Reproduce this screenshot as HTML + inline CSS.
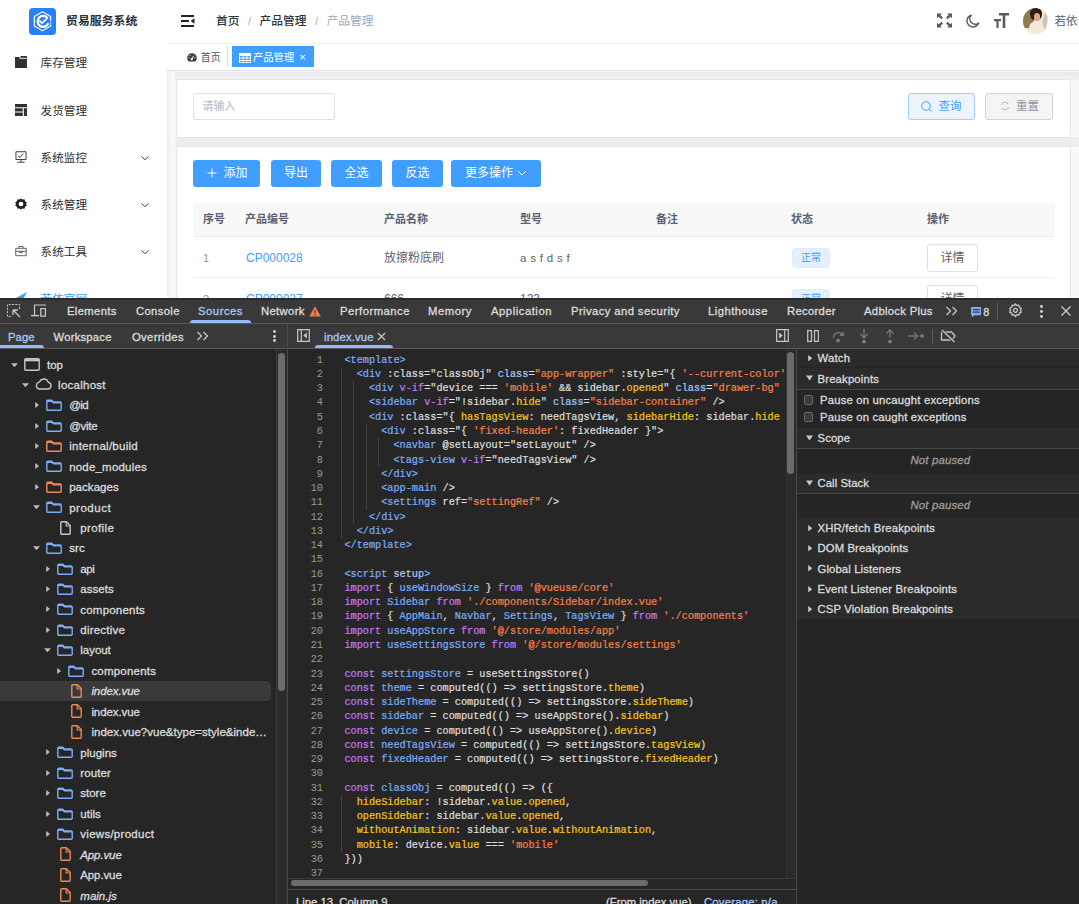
<!DOCTYPE html>
<html lang="zh-CN">
<head>
<meta charset="utf-8">
<title>贸易服务系统</title>
<style>
*{box-sizing:border-box;margin:0;padding:0}
html,body{width:1079px;height:904px;overflow:hidden;background:#fff}
body{position:relative;font-family:"Liberation Sans","Noto Sans CJK SC",sans-serif;-webkit-font-smoothing:antialiased}
.abs{position:absolute}
/* ---------- web page ---------- */
#page{position:absolute;left:0;top:0;width:1079px;height:298px;overflow:hidden;background:#f8f8f9;color:#303133;font-size:12px}
#side{position:absolute;left:0;top:0;width:167px;height:298px;background:#fff;box-shadow:1px 0 5px rgba(0,21,41,.07)}
#side .logo{position:absolute;left:29px;top:8px;width:27px;height:27px;border-radius:4px;background:#2a80f5}
#side .title{position:absolute;left:66px;top:11.700px;font-size:11.900px;font-weight:700;color:#2b2f3a;white-space:nowrap;line-height:18px}
.mi{position:absolute;left:0;width:167px;height:47px;line-height:47px;color:#303133;font-size:11.600px;white-space:nowrap}
.mi .tx{position:absolute;left:40.600px;top:0}
.mi svg.ic{position:absolute;left:15px;top:17px;width:12px;height:12px}
.mi svg.ar{position:absolute;left:140px;top:19px;width:10px;height:10px}
#nav{position:absolute;left:167px;top:0;width:912px;height:43px;background:#fff}
#tags{position:absolute;left:167px;top:43px;width:912px;height:28px;background:#fff;border-top:1px solid #f1f1f3;border-bottom:1px solid #dfe1e5}
.band{position:absolute;left:175px;width:904px}
.card{position:absolute;left:176px;width:895px;background:#fff;border:1px solid #e4e6ea;border-radius:3px}
.btn{position:absolute;height:27px;line-height:27px;border-radius:3px;background:#409eff;color:#fff;font-size:12px;text-align:center;white-space:nowrap}
.th{position:absolute;top:0;line-height:33px;font-weight:700;color:#5a6172;font-size:11px;white-space:nowrap}
.td{position:absolute;white-space:nowrap;font-size:12px;color:#606266}
/* ---------- devtools ---------- */
#dt{position:absolute;left:0;top:298px;width:1079px;height:606px;background:#262626;color:#e3e3e3;font-size:11.5px;overflow:hidden}
.t{position:absolute;white-space:nowrap;-webkit-text-stroke:.3px}
#dt svg{display:block}
#ln{font-family:"Liberation Mono",monospace;font-size:10.220px;line-height:14.260px;color:#9a9a9a;text-align:right}
#code{font-family:"Liberation Mono",monospace;font-size:10.220px;line-height:14.260px;color:#dedede;white-space:pre;-webkit-text-stroke:.22px}
.ct{color:#7cacf8}.ca{color:#a8c7fa}.ck{color:#c27af5}.cs{color:#f4804a}.cp{color:#f7c41c}.cd{color:#7cacf8}
</style>
</head>
<body>
<div id="page">
<div id="side">
  <div class="logo"><svg viewBox="0 0 27 27" width="27" height="27"><path d="M13.500 3.800L21.600 8.500V18L13.500 22.700 5.400 18V8.500z" fill="none" stroke="#fff" stroke-width="1.300" stroke-linejoin="round" opacity=".92"/><path d="M18.200 9.700A5.500 5.500 0 1 0 18.900 16" fill="none" stroke="#fff" stroke-width="2.300" stroke-linecap="round"/><path d="M10.800 13l2.300 2.200 4.200-4" fill="none" stroke="#fff" stroke-width="1.800" stroke-linecap="round" stroke-linejoin="round"/><path d="M21.600 12v4.500" stroke="#2a80f5" stroke-width="2.200"/><path d="M21.700 12.300v3.900" stroke="#b9d6ff" stroke-width="1"/></svg></div>
  <div class="title">贸易服务系统</div>
  <div class="mi" style="top:38.600px"><svg class="ic" viewBox="0 0 13 13"><path d="M0 1h5v2h8v10H0z" fill="#303133"/><path d="M6 0h7v2H6z" fill="#303133"/></svg><span class="tx">库存管理</span></div>
  <div class="mi" style="top:86.5px"><svg class="ic" viewBox="0 0 13 13"><path d="M0 0h13v3.4H0zM0 4.6h8.4v3.4H0zM9.6 4.6H13V13H9.6zM0 9.2h8.4V13H0z" fill="#303133"/></svg><span class="tx">发货管理</span></div>
  <div class="mi" style="top:133.5px"><svg class="ic" viewBox="0 0 13 13"><path d="M1 .8h11v8.4H1z" fill="none" stroke="#303133" stroke-width="1"/><path d="M3.4 5.2l2 1.8 3.6-4" fill="none" stroke="#303133" stroke-width="1"/><path d="M6.5 9.2v2.6M2.6 12.2h7.8" stroke="#303133" stroke-width="1"/></svg><span class="tx">系统监控</span><svg class="ar" viewBox="0 0 10 10"><path d="M1.6 3.4L5 6.8l3.4-3.4" fill="none" stroke="#303133" stroke-width="1"/></svg></div>
  <div class="mi" style="top:180.5px"><svg class="ic" viewBox="0 0 13 13"><path d="M6.5 0l1.7 1.2 2.1-.3.6 2 1.8 1.100-.7 2 .7 2-1.800 1.100-.6 2-2.100-.3L6.500 12l-1.700-1.200-2.100.3-.600-2L.3 8l.7-2-.7-2 1.800-1.100.6-2 2.100.3z" fill="#222" transform="translate(0 .5)"/><circle cx="6.500" cy="6.500" r="2.500" fill="#fff"/></svg><span class="tx">系统管理</span><svg class="ar" viewBox="0 0 10 10"><path d="M1.600 3.400L5 6.800l3.400-3.400" fill="none" stroke="#303133" stroke-width="1"/></svg></div>
  <div class="mi" style="top:227.5px"><svg class="ic" viewBox="0 0 13 13"><path d="M.8 3.600h11.400v8H.8z" fill="none" stroke="#555" stroke-width="1"/><path d="M4.200 3.400V1.600h4.600v1.800M.8 6.800h11.400M5 6.800v1.400h3V6.800" fill="none" stroke="#555" stroke-width="1"/></svg><span class="tx">系统工具</span><svg class="ar" viewBox="0 0 10 10"><path d="M1.600 3.400L5 6.800l3.400-3.400" fill="none" stroke="#303133" stroke-width="1"/></svg></div>
  <div class="mi" style="top:274.5px;color:#409eff"><svg class="ic" viewBox="0 0 13 13"><path d="M13 0L0 7l4.500 1.500L6 13z" fill="#409eff"/></svg><span class="tx">若依官网</span></div>
</div>
<div id="nav">
  <svg class="abs" style="left:14px;top:13.800px" width="14" height="14" viewBox="0 0 14 14"><path d="M0 2h13M0 7h8M0 12h13" stroke="#1f2329" stroke-width="1.900"/><path d="M13.500 4.200v5.600L9.600 7z" fill="#1f2329"/></svg>
  <div class="abs" style="left:49px;top:11px;line-height:20px;font-size:11.750px;white-space:nowrap;color:#303133;font-weight:500"><span>首页</span><span style="color:#a8abb2;margin:0 8.500px;font-size:11px;font-weight:400">/</span><span>产品管理</span><span style="color:#a8abb2;margin:0 8.500px;font-size:11px;font-weight:400">/</span><span style="color:#97a8be;font-weight:400">产品管理</span></div>
  <svg class="abs" style="left:770px;top:13px" width="15" height="15" viewBox="0 0 16 15"><g fill="#585b60"><path d="M0 0h5.200L3.600 1.600 6.400 4.400 4.600 6.200 1.800 3.400 0 5zM16 0v5l-1.800-1.600-2.800 2.800-1.800-1.800 2.800-2.800L10.800 0zM0 15v-5l1.800 1.600 2.800-2.800 1.800 1.800-2.800 2.800L5.200 15zM16 15h-5.200l1.600-1.600-2.800-2.800 1.800-1.800 2.800 2.800L16 10z"/></g></svg>
  <svg class="abs" style="left:798px;top:14px" width="15" height="14" viewBox="0 0 15 14"><path d="M6.200 1.200A6 6 0 1 0 13.600 9 5.400 5.400 0 0 1 6.200 1.200z" fill="none" stroke="#585b60" stroke-width="1.500" stroke-linejoin="round"/></svg>
  <svg class="abs" style="left:827px;top:13px" width="15" height="15" viewBox="0 0 15 15"><path d="M5 0h10v2.400h-3.700V15H8.700V2.400H5zM0 6h7v2.200H4.600V15H2.400V8.200H0z" fill="#585b60"/></svg>
  <div class="abs" style="left:855.500px;top:8px;width:25px;height:25.500px;border-radius:50%;overflow:hidden;background:#f0e6d2"><div class="abs" style="left:-3px;top:-2px;width:14px;height:22px;background:#8d7c50;border-radius:0 0 40% 20%"></div><div class="abs" style="left:7px;top:0;width:12px;height:12px;border-radius:45%;background:#2e1b12"></div><div class="abs" style="left:11px;top:4.500px;width:6.500px;height:8px;border-radius:45%;background:#e2a585"></div><div class="abs" style="left:20px;top:4px;width:4px;height:18px;background:#c9c3b8;transform:rotate(12deg)"></div><div class="abs" style="left:6px;top:13px;width:15px;height:14px;border-radius:50% 50% 0 0;background:#f3ead8"></div></div>
  <div class="abs" style="left:887.500px;top:11px;line-height:20px;font-size:11.600px;white-space:nowrap;color:#5a5e66">若依</div>
</div>
<div id="tags">
  <div class="abs" style="left:20px;top:2px;height:21px;line-height:23.500px;font-size:9.900px;color:#495060;white-space:nowrap"><svg width="10" height="9" viewBox="0 0 10 9" style="vertical-align:-1px;margin-right:3.800px"><path d="M5 .2a4.800 4.800 0 0 0-4.800 4.800c0 1.300.5 2.400 1.200 3.200.2.200.4.300.7.300h5.800c.3 0 .5-.1.700-.3.700-.8 1.200-1.900 1.200-3.200A4.800 4.800 0 0 0 5 .2z" fill="#3a3a3a"/><path d="M4.800 6l2-3.400" stroke="#fff" stroke-width="1"/><circle cx="4.800" cy="6.200" r="1.100" fill="#fff"/><circle cx="2" cy="4.800" r=".6" fill="#fff"/><circle cx="3" cy="2.600" r=".6" fill="#fff"/><circle cx="8" cy="4.800" r=".6" fill="#fff"/></svg>首页</div>
  <div class="abs" style="left:60px;top:2px;width:1px;height:21px;background:#d8dce5"></div>
  <div class="abs" style="left:65px;top:2px;width:82px;height:21px;line-height:23.500px;background:#409eff;color:#fff;font-size:10.300px;white-space:nowrap;padding-left:7px"><svg width="12" height="10" viewBox="0 0 12 10" style="vertical-align:-1.500px;margin-right:2px"><path d="M0 0h12v10H0z" fill="#fff"/><path d="M1 3h2.700v1.600H1zM4.600 3h2.800v1.600H4.600zM8.300 3H11v1.600H8.300zM1 5.500h2.700v1.500H1zM4.600 5.500h2.800v1.500H4.600zM8.300 5.500H11v1.500H8.300zM1 7.900h2.700v1.300H1zM4.600 7.900h2.800v1.300H4.600zM8.300 7.900H11v1.300H8.300z" fill="#409eff"/></svg>产品管理<span style="margin-left:5px;font-size:11px">×</span></div>
</div>
<div class="band" style="top:72px;height:8px;background:linear-gradient(#e9e9eb,#f1f1f2)"></div><div class="band" style="top:137px;height:10px;background:#eeeeef"></div>
<div class="card" style="top:79px;height:59px">
  <div class="abs" style="left:16px;top:13px;width:142px;height:27px;border:1px solid #dcdfe6;border-radius:3px;line-height:25px;padding-left:8.500px;font-size:11px;color:#b4b7be">请输入</div>
  <div class="abs" style="left:731px;top:13px;width:67px;height:27px;border:1px solid #a0cfff;border-radius:3px;background:#ecf5ff;color:#409eff;line-height:25px;font-size:11.500px;white-space:nowrap;padding-left:12px"><svg width="11" height="11" viewBox="0 0 11 11" style="vertical-align:-1.500px;margin-right:6.500px"><circle cx="5" cy="5" r="4.300" fill="none" stroke="#409eff" stroke-width="1"/><path d="M8.200 8.200l2.300 2.300" stroke="#409eff" stroke-width="1"/></svg>查询</div>
  <div class="abs" style="left:808px;top:13px;width:68px;height:27px;border:1px solid #d3d4d6;border-radius:3px;background:#f4f4f5;color:#909399;line-height:25px;font-size:11.500px;white-space:nowrap;padding-left:14px"><svg width="10" height="10" viewBox="0 0 10 10" style="vertical-align:-1px;margin-right:6px"><path d="M1.400 3.600A4 4 0 0 1 8.600 3.600M8.600 6.400A4 4 0 0 1 1.400 6.400" fill="none" stroke="#909399" stroke-width="1" stroke-dasharray="2 1"/></svg>重置</div>
</div>
<div class="card" style="top:146px;height:170px">
  <div class="btn" style="left:16px;top:12.500px;width:67px"><svg style="position:absolute;left:14px;top:8.500px" width="10" height="10" viewBox="0 0 10 10"><path d="M5 .5v9M.5 5h9" stroke="#fff" stroke-width="1"/></svg><span style="position:absolute;left:30.500px;top:0">添加</span></div>
  <div class="btn" style="left:94px;top:12.500px;width:50px">导出</div>
  <div class="btn" style="left:154px;top:12.500px;width:51px">全选</div>
  <div class="btn" style="left:215px;top:12.500px;width:51px">反选</div>
  <div class="btn" style="left:274px;top:12.500px;width:90px">更多操作<svg width="10" height="10" viewBox="0 0 10 10" style="margin-left:4px;vertical-align:-1px"><path d="M1 3L5 7l4-4" fill="none" stroke="#fff" stroke-width="1"/></svg></div>
  <div class="abs" style="left:16px;top:56px;width:862px;height:34px;background:#f8f8f9;border-bottom:1px solid #ebeef5">
    <div class="th" style="left:10px">序号</div><div class="th" style="left:52px">产品编号</div><div class="th" style="left:191px">产品名称</div><div class="th" style="left:327px">型号</div><div class="th" style="left:463px">备注</div><div class="th" style="left:598px">状态</div><div class="th" style="left:734px">操作</div>
  </div>
  <div class="abs" style="left:16px;top:90px;width:862px;height:41px;border-bottom:1px solid #ebeef5;line-height:42px">
    <div class="td" style="left:10px;color:#909399;font-size:11px">1</div><div class="td" style="left:53px;color:#409eff">CP000028</div><div class="td" style="left:191px">放擦粉底刷</div><div class="td" style="left:327px;letter-spacing:.3px;font-size:11.500px">a s f d s f</div>
    <div class="abs" style="left:599px;top:10.500px;width:38px;height:20px;line-height:18px;border:1px solid #dcebfd;border-radius:4px;background:#e4f0ff;color:#409eff;font-size:10px;text-align:center">正常</div>
    <div class="abs" style="left:734px;top:7px;width:51px;height:27.500px;line-height:26px;border:1px solid #dcdfe6;border-radius:3px;background:#fff;color:#606266;font-size:12px;text-align:center">详情</div>
  </div>
  <div class="abs" style="left:16px;top:131px;width:862px;height:41px;line-height:42px">
    <div class="td" style="left:10px;color:#909399;font-size:11px">2</div><div class="td" style="left:53px;color:#409eff">CP000027</div><div class="td" style="left:191px">666</div><div class="td" style="left:327px">123</div>
    <div class="abs" style="left:599px;top:10.500px;width:38px;height:20px;line-height:18px;border:1px solid #dcebfd;border-radius:4px;background:#e4f0ff;color:#409eff;font-size:10px;text-align:center">正常</div>
    <div class="abs" style="left:734px;top:7px;width:51px;height:27.500px;line-height:26px;border:1px solid #dcdfe6;border-radius:3px;background:#fff;color:#606266;font-size:12px;text-align:center">详情</div>
  </div>
</div>
</div>
<div id="dt">
<div class="abs" style="left:0px;top:0px;width:1079px;height:2px;background:#2c2c2c;"></div>
<div class="abs" style="left:0px;top:2px;width:1079px;height:23px;background:#393939;"></div>
<div class="abs" style="left:0px;top:25px;width:1079px;height:1px;background:#5a5a5a;"></div>
<div class="abs" style="left:0px;top:26px;width:1079px;height:24px;background:#393939;"></div>
<div class="abs" style="left:0px;top:50px;width:1079px;height:1px;background:#5a5a5a;"></div>
<div class="abs" style="left:190px;top:22.3px;width:61px;height:3.2px;background:#94baf8;border-radius:3px 3px 0 0;"></div>
<svg class="abs" style="left:7px;top:5.5px" width="14" height="14" viewBox="0 0 14 14"><path d="M12.500 5V.500H.500v12H5" fill="none" stroke="#c7c7c7" stroke-width="1" stroke-dasharray="2 1.300"/><path d="M6 6l7 7M6 6h5M6 6v5" fill="none" stroke="#c7c7c7" stroke-width="1.300"/></svg>
<svg class="abs" style="left:31px;top:5.5px" width="16" height="14" viewBox="0 0 16 14"><path d="M3.500 11V1h11.500" fill="none" stroke="#c7c7c7" stroke-width="1.200"/><path d="M0 11.600h8" stroke="#c7c7c7" stroke-width="1.400"/><path d="M9.800 4.600h4.600v7.600H9.800z" fill="none" stroke="#c7c7c7" stroke-width="1.300"/></svg>
<div class="t" style="left:67px;top:5px;line-height:16px;font-size:11.3px;color:#dddddd;letter-spacing:0.34px;">Elements</div>
<div class="t" style="left:136px;top:5px;line-height:16px;font-size:11.3px;color:#dddddd;letter-spacing:0.34px;">Console</div>
<div class="t" style="left:198px;top:5px;line-height:16px;font-size:11.3px;color:#a8c7fa;letter-spacing:0.51px;">Sources</div>
<div class="t" style="left:261px;top:5px;line-height:16px;font-size:11.3px;color:#dddddd;letter-spacing:0.34px;">Network</div>
<div class="t" style="left:340px;top:5px;line-height:16px;font-size:11.3px;color:#dddddd;letter-spacing:0.48px;">Performance</div>
<div class="t" style="left:428px;top:5px;line-height:16px;font-size:11.3px;color:#dddddd;letter-spacing:0.54px;">Memory</div>
<div class="t" style="left:491px;top:5px;line-height:16px;font-size:11.3px;color:#dddddd;letter-spacing:0.52px;">Application</div>
<div class="t" style="left:571px;top:5px;line-height:16px;font-size:11.3px;color:#dddddd;letter-spacing:0.39px;">Privacy and security</div>
<div class="t" style="left:708px;top:5px;line-height:16px;font-size:11.3px;color:#dddddd;letter-spacing:0.47px;">Lighthouse</div>
<div class="t" style="left:787px;top:5px;line-height:16px;font-size:11.3px;color:#dddddd;letter-spacing:0.29px;">Recorder</div>
<div class="t" style="left:864px;top:5px;line-height:16px;font-size:11.3px;color:#dddddd;letter-spacing:0.29px;">Adblock Plus</div>
<svg class="abs" style="left:309px;top:7.5px" width="12" height="11" viewBox="0 0 12 11"><path d="M6 .3L11.800 10.600H.2z" fill="#ee7d45"/><path d="M6 4v3.400" stroke="#3c3c3c" stroke-width="1.200"/><circle cx="6" cy="8.900" r=".7" fill="#3c3c3c"/></svg>
<svg class="abs" style="left:945px;top:8px" width="14" height="10" viewBox="0 0 14 10"><path d="M1.500 1l4 4-4 4M7.500 1l4 4-4 4" fill="none" stroke="#c7c7c7" stroke-width="1.300"/></svg>
<svg class="abs" style="left:970.500px;top:9px" width="10.500" height="10.500" viewBox="0 0 9 9"><path d="M0 0h9v7H3L1 9V7H0z" fill="#7cacf8"/><path d="M1.500 2.200h6M1.500 4.400h6" stroke="#3c3c3c" stroke-width="1"/></svg>
<div class="t" style="left:983.3px;top:5.5px;line-height:16px;font-size:10.8px;color:#dddddd;">8</div>
<div class="abs" style="left:997px;top:5px;width:1px;height:17px;background:#5e5e5e;"></div>
<svg class="abs" style="left:1008px;top:5px" width="15" height="15" viewBox="0 0 15 15"><path d="M7.500 1l1.300 1.700 2.100-.5.500 2.100 1.900 1-.9 1.900.9 1.900-1.900 1-.5 2.100-2.100-.5L7.500 13.600 6.200 11.700l-2.100.5-.5-2.100-1.900-1 .9-1.900-.9-1.900 1.900-1 .5-2.100 2.100.5z" fill="none" stroke="#c7c7c7" stroke-width="1.300" stroke-linejoin="round"/><circle cx="7.500" cy="7.300" r="2" fill="none" stroke="#c7c7c7" stroke-width="1.300"/></svg>
<div class="abs" style="left:1039.7px;top:6.7px;width:2.9px;height:2.9px;background:#d0d0d0;border-radius:50%;"></div>
<div class="abs" style="left:1039.7px;top:11.7px;width:2.9px;height:2.9px;background:#d0d0d0;border-radius:50%;"></div>
<div class="abs" style="left:1039.7px;top:16.7px;width:2.9px;height:2.9px;background:#d0d0d0;border-radius:50%;"></div>
<svg class="abs" style="left:1060px;top:7px" width="12" height="12" viewBox="0 0 12 12"><path d="M1.500 1.500l9 9M10.500 1.500l-9 9" stroke="#c7c7c7" stroke-width="1.400"/></svg>
<div class="t" style="left:8px;top:30.5px;line-height:16px;font-size:11.3px;color:#a8c7fa;letter-spacing:0.04px;">Page</div>
<div class="abs" style="left:0px;top:47.3px;width:44px;height:3.2px;background:#94baf8;border-radius:0 3px 0 0;"></div>
<div class="t" style="left:53.5px;top:30.5px;line-height:16px;font-size:11.3px;color:#dddddd;letter-spacing:0.21px;">Workspace</div>
<div class="t" style="left:132px;top:30.5px;line-height:16px;font-size:11.3px;color:#dddddd;letter-spacing:0.32px;">Overrides</div>
<svg class="abs" style="left:196px;top:33px" width="14" height="10" viewBox="0 0 14 10"><path d="M1.500 1l4 4-4 4M7.500 1l4 4-4 4" fill="none" stroke="#c7c7c7" stroke-width="1.300"/></svg>
<div class="abs" style="left:272.7px;top:32.2px;width:2.9px;height:2.9px;background:#d0d0d0;border-radius:50%;"></div>
<div class="abs" style="left:272.7px;top:36.7px;width:2.9px;height:2.9px;background:#d0d0d0;border-radius:50%;"></div>
<div class="abs" style="left:272.7px;top:41.2px;width:2.9px;height:2.9px;background:#d0d0d0;border-radius:50%;"></div>
<div class="abs" style="left:287px;top:26px;width:1px;height:580px;background:#4a4a4a;"></div>
<svg class="abs" style="left:297px;top:30.8px" width="13" height="13" viewBox="0 0 13 13"><path d="M.7.700h11.600v11.600H.7z" fill="none" stroke="#c7c7c7" stroke-width="1.200"/><path d="M4.300.700v11.600" stroke="#c7c7c7" stroke-width="1.200"/><path d="M9.900 3.500L6.200 6.500 9.900 9.500z" fill="#c7c7c7"/></svg>
<div class="t" style="left:324px;top:30.5px;line-height:16px;font-size:11.3px;color:#a8c7fa;letter-spacing:0.14px;">index.vue</div>
<svg class="abs" style="left:377px;top:34px" width="9" height="9" viewBox="0 0 9 9"><path d="M1 1l7 7M8 1l-7 7" stroke="#c7c7c7" stroke-width="1.200"/></svg>
<div class="abs" style="left:314.5px;top:47.3px;width:78px;height:3.2px;background:#94baf8;border-radius:3px 3px 0 0;"></div>
<svg class="abs" style="left:776px;top:30.8px" width="13" height="13" viewBox="0 0 13 13"><path d="M.7.700h11.600v11.600H.7z" fill="none" stroke="#c7c7c7" stroke-width="1.200"/><path d="M8.700.700v11.600" stroke="#c7c7c7" stroke-width="1.200"/><path d="M3.100 3.500L6.800 6.500 3.100 9.500z" fill="#c7c7c7"/></svg>
<div class="abs" style="left:796px;top:51px;width:1px;height:555px;background:#4a4a4a;"></div>
<svg class="abs" style="left:807px;top:32px" width="12" height="12" viewBox="0 0 12 12"><path d="M.7.700h3.800v10.600H.7zM7.500.700h3.800v10.600H7.500z" fill="none" stroke="#c7c7c7" stroke-width="1.200"/></svg>
<svg class="abs" style="left:832px;top:31.5px" width="13" height="13" viewBox="0 0 13 13"><path d="M1.500 8A5 5 0 0 1 11 5.500" fill="none" stroke="#7a7a7a" stroke-width="1.300"/><path d="M11.800 1.500v4.600H7.200z" fill="#7a7a7a"/><circle cx="6" cy="10.500" r="1.900" fill="#7a7a7a"/></svg>
<svg class="abs" style="left:859px;top:30.5px" width="10" height="15" viewBox="0 0 10 15"><path d="M5 0v8" stroke="#7a7a7a" stroke-width="1.300"/><path d="M1.500 5L5 8.800 8.500 5" fill="none" stroke="#7a7a7a" stroke-width="1.300"/><circle cx="5" cy="12.600" r="1.900" fill="#7a7a7a"/></svg>
<svg class="abs" style="left:885px;top:30.5px" width="10" height="15" viewBox="0 0 10 15"><path d="M5 9V1" stroke="#7a7a7a" stroke-width="1.300"/><path d="M1.500 4.500L5 .8 8.500 4.500" fill="none" stroke="#7a7a7a" stroke-width="1.300"/><circle cx="5" cy="12.600" r="1.900" fill="#7a7a7a"/></svg>
<svg class="abs" style="left:908px;top:33px" width="17" height="10" viewBox="0 0 17 10"><path d="M0 5h9" stroke="#7a7a7a" stroke-width="1.300"/><path d="M6 1.500L9.600 5 6 8.500" fill="none" stroke="#7a7a7a" stroke-width="1.300"/><circle cx="14" cy="5" r="1.900" fill="#7a7a7a"/></svg>
<div class="abs" style="left:932px;top:31px;width:1px;height:15px;background:#5e5e5e;"></div>
<svg class="abs" style="left:940px;top:31px" width="17" height="14" viewBox="0 0 17 14"><path d="M1.500 3h10l3.500 4-3.500 4h-10z" fill="none" stroke="#c7c7c7" stroke-width="1.300" stroke-linejoin="round"/><path d="M1.500.800l13 12.400" stroke="#3c3c3c" stroke-width="3"/><path d="M2 1l12.500 12" stroke="#c7c7c7" stroke-width="1.300"/></svg>
<div class="abs" style="left:0px;top:383px;width:271px;height:20.4px;background:#3a3a3a;border-radius:0 5px 5px 0;"></div>
<svg class="abs" style="left:10.5px;top:64.5px" width="7" height="4.200" viewBox="0 0 7 4.200"><path d="M0 .2h7L3.500 4.200z" fill="#bdbdbd"/></svg>
<svg class="abs" style="left:24px;top:59.8px" width="16" height="13" viewBox="0 0 16 13"><path d="M.8 1.800a1 1 0 0 1 1-1h12.400a1 1 0 0 1 1 1v9.400a1 1 0 0 1-1 1H1.800a1 1 0 0 1-1-1z" fill="none" stroke="#c7c7c7" stroke-width="1.400"/><path d="M.8 2.200h14.400" stroke="#c7c7c7" stroke-width="2.200"/></svg>
<div class="t" style="left:47px;top:58.6px;line-height:16px;font-size:11.5px;color:#dddddd;">top</div>
<svg class="abs" style="left:21.6px;top:84.92px" width="7" height="4.200" viewBox="0 0 7 4.200"><path d="M0 .2h7L3.500 4.200z" fill="#bdbdbd"/></svg>
<svg class="abs" style="left:35.1px;top:80.22px" width="17" height="12" viewBox="0 0 17 12"><path d="M4.200 11h8.600a3.300 3.300 0 0 0 .5-6.550A4.600 4.600 0 0 0 4.500 4.100 3.500 3.500 0 0 0 4.200 11z" fill="none" stroke="#c7c7c7" stroke-width="1.300" stroke-linejoin="round"/></svg>
<div class="t" style="left:58.1px;top:79.02px;line-height:16px;font-size:11.5px;color:#dddddd;letter-spacing:0.26px;">localhost</div>
<svg class="abs" style="left:34.7px;top:104.14px" width="4" height="6" viewBox="0 0 4 6"><path d="M.2 0v6L4 3z" fill="#bdbdbd"/></svg>
<svg class="abs" style="left:46.2px;top:101.14px" width="16" height="12" viewBox="0 0 16 12"><path d="M.8 2.300a1 1 0 0 1 1-1h4l1.400 1.600h7a1 1 0 0 1 1 1v6.300a1 1 0 0 1-1 1H1.800a1 1 0 0 1-1-1z" fill="none" stroke="#7cacf8" stroke-width="1.400" stroke-linejoin="round"/><path d="M1 2.200h5l1.400 1.500h7.600" fill="none" stroke="#7cacf8" stroke-width="1.600" stroke-linejoin="round"/></svg>
<div class="t" style="left:69.2px;top:99.44px;line-height:16px;font-size:11.5px;color:#dddddd;letter-spacing:-0.56px;">@id</div>
<svg class="abs" style="left:34.7px;top:124.56px" width="4" height="6" viewBox="0 0 4 6"><path d="M.2 0v6L4 3z" fill="#bdbdbd"/></svg>
<svg class="abs" style="left:46.2px;top:121.56px" width="16" height="12" viewBox="0 0 16 12"><path d="M.8 2.300a1 1 0 0 1 1-1h4l1.400 1.600h7a1 1 0 0 1 1 1v6.300a1 1 0 0 1-1 1H1.800a1 1 0 0 1-1-1z" fill="none" stroke="#7cacf8" stroke-width="1.400" stroke-linejoin="round"/><path d="M1 2.200h5l1.400 1.500h7.600" fill="none" stroke="#7cacf8" stroke-width="1.600" stroke-linejoin="round"/></svg>
<div class="t" style="left:69.2px;top:119.86px;line-height:16px;font-size:11.5px;color:#dddddd;letter-spacing:-0.27px;">@vite</div>
<svg class="abs" style="left:34.7px;top:144.98px" width="4" height="6" viewBox="0 0 4 6"><path d="M.2 0v6L4 3z" fill="#bdbdbd"/></svg>
<svg class="abs" style="left:46.2px;top:141.98px" width="16" height="12" viewBox="0 0 16 12"><path d="M.8 2.300a1 1 0 0 1 1-1h4l1.400 1.600h7a1 1 0 0 1 1 1v6.300a1 1 0 0 1-1 1H1.800a1 1 0 0 1-1-1z" fill="none" stroke="#ec8a57" stroke-width="1.400" stroke-linejoin="round"/><path d="M1 2.200h5l1.400 1.500h7.600" fill="none" stroke="#ec8a57" stroke-width="1.600" stroke-linejoin="round"/></svg>
<div class="t" style="left:69.2px;top:140.28px;line-height:16px;font-size:11.5px;color:#dddddd;letter-spacing:0.25px;">internal/build</div>
<svg class="abs" style="left:34.7px;top:165.4px" width="4" height="6" viewBox="0 0 4 6"><path d="M.2 0v6L4 3z" fill="#bdbdbd"/></svg>
<svg class="abs" style="left:46.2px;top:162.4px" width="16" height="12" viewBox="0 0 16 12"><path d="M.8 2.300a1 1 0 0 1 1-1h4l1.400 1.600h7a1 1 0 0 1 1 1v6.300a1 1 0 0 1-1 1H1.800a1 1 0 0 1-1-1z" fill="none" stroke="#7cacf8" stroke-width="1.400" stroke-linejoin="round"/><path d="M1 2.200h5l1.400 1.500h7.600" fill="none" stroke="#7cacf8" stroke-width="1.600" stroke-linejoin="round"/></svg>
<div class="t" style="left:69.2px;top:160.7px;line-height:16px;font-size:11.5px;color:#dddddd;letter-spacing:0.19px;">node_modules</div>
<svg class="abs" style="left:34.7px;top:185.82px" width="4" height="6" viewBox="0 0 4 6"><path d="M.2 0v6L4 3z" fill="#bdbdbd"/></svg>
<svg class="abs" style="left:46.2px;top:182.82px" width="16" height="12" viewBox="0 0 16 12"><path d="M.8 2.300a1 1 0 0 1 1-1h4l1.400 1.600h7a1 1 0 0 1 1 1v6.300a1 1 0 0 1-1 1H1.800a1 1 0 0 1-1-1z" fill="none" stroke="#ec8a57" stroke-width="1.400" stroke-linejoin="round"/><path d="M1 2.200h5l1.400 1.500h7.600" fill="none" stroke="#ec8a57" stroke-width="1.600" stroke-linejoin="round"/></svg>
<div class="t" style="left:69.2px;top:181.12px;line-height:16px;font-size:11.5px;color:#dddddd;letter-spacing:0.04px;">packages</div>
<svg class="abs" style="left:32.7px;top:207.44px" width="7" height="4.200" viewBox="0 0 7 4.200"><path d="M0 .2h7L3.500 4.200z" fill="#bdbdbd"/></svg>
<svg class="abs" style="left:46.2px;top:203.24px" width="16" height="12" viewBox="0 0 16 12"><path d="M.8 2.300a1 1 0 0 1 1-1h4l1.400 1.600h7a1 1 0 0 1 1 1v6.300a1 1 0 0 1-1 1H1.800a1 1 0 0 1-1-1z" fill="none" stroke="#7cacf8" stroke-width="1.400" stroke-linejoin="round"/><path d="M1 2.200h5l1.400 1.500h7.600" fill="none" stroke="#7cacf8" stroke-width="1.600" stroke-linejoin="round"/></svg>
<div class="t" style="left:69.2px;top:201.54px;line-height:16px;font-size:11.5px;color:#dddddd;letter-spacing:0.52px;">product</div>
<svg class="abs" style="left:59.8px;top:222.66px" width="11" height="14" viewBox="0 0 11 14"><path d="M.8 1.800a1 1 0 0 1 1-1h4.600l3.800 3.800v7.600a1 1 0 0 1-1 1H1.800a1 1 0 0 1-1-1z" fill="none" stroke="#c7c7c7" stroke-width="1.400" stroke-linejoin="round"/><path d="M6.200 1v4h4" fill="none" stroke="#c7c7c7" stroke-width="1.200"/></svg>
<div class="t" style="left:80.3px;top:221.96px;line-height:16px;font-size:11.5px;color:#dddddd;letter-spacing:0.36px;">profile</div>
<svg class="abs" style="left:32.7px;top:248.28px" width="7" height="4.200" viewBox="0 0 7 4.200"><path d="M0 .2h7L3.500 4.200z" fill="#bdbdbd"/></svg>
<svg class="abs" style="left:46.2px;top:244.08px" width="16" height="12" viewBox="0 0 16 12"><path d="M.8 2.300a1 1 0 0 1 1-1h4l1.400 1.600h7a1 1 0 0 1 1 1v6.300a1 1 0 0 1-1 1H1.800a1 1 0 0 1-1-1z" fill="none" stroke="#7cacf8" stroke-width="1.400" stroke-linejoin="round"/><path d="M1 2.200h5l1.400 1.500h7.600" fill="none" stroke="#7cacf8" stroke-width="1.600" stroke-linejoin="round"/></svg>
<div class="t" style="left:69.2px;top:242.38px;line-height:16px;font-size:11.5px;color:#dddddd;letter-spacing:0.09px;">src</div>
<svg class="abs" style="left:45.8px;top:267.5px" width="4" height="6" viewBox="0 0 4 6"><path d="M.2 0v6L4 3z" fill="#bdbdbd"/></svg>
<svg class="abs" style="left:57.3px;top:264.5px" width="16" height="12" viewBox="0 0 16 12"><path d="M.8 2.300a1 1 0 0 1 1-1h4l1.400 1.600h7a1 1 0 0 1 1 1v6.300a1 1 0 0 1-1 1H1.800a1 1 0 0 1-1-1z" fill="none" stroke="#7cacf8" stroke-width="1.400" stroke-linejoin="round"/><path d="M1 2.200h5l1.400 1.500h7.600" fill="none" stroke="#7cacf8" stroke-width="1.600" stroke-linejoin="round"/></svg>
<div class="t" style="left:80.3px;top:262.8px;line-height:16px;font-size:11.5px;color:#dddddd;letter-spacing:-0.42px;">api</div>
<svg class="abs" style="left:45.8px;top:287.92px" width="4" height="6" viewBox="0 0 4 6"><path d="M.2 0v6L4 3z" fill="#bdbdbd"/></svg>
<svg class="abs" style="left:57.3px;top:284.92px" width="16" height="12" viewBox="0 0 16 12"><path d="M.8 2.300a1 1 0 0 1 1-1h4l1.400 1.600h7a1 1 0 0 1 1 1v6.300a1 1 0 0 1-1 1H1.800a1 1 0 0 1-1-1z" fill="none" stroke="#7cacf8" stroke-width="1.400" stroke-linejoin="round"/><path d="M1 2.200h5l1.400 1.500h7.600" fill="none" stroke="#7cacf8" stroke-width="1.600" stroke-linejoin="round"/></svg>
<div class="t" style="left:80.3px;top:283.22px;line-height:16px;font-size:11.5px;color:#dddddd;letter-spacing:0.05px;">assets</div>
<svg class="abs" style="left:45.8px;top:308.34px" width="4" height="6" viewBox="0 0 4 6"><path d="M.2 0v6L4 3z" fill="#bdbdbd"/></svg>
<svg class="abs" style="left:57.3px;top:305.34px" width="16" height="12" viewBox="0 0 16 12"><path d="M.8 2.300a1 1 0 0 1 1-1h4l1.400 1.600h7a1 1 0 0 1 1 1v6.300a1 1 0 0 1-1 1H1.800a1 1 0 0 1-1-1z" fill="none" stroke="#7cacf8" stroke-width="1.400" stroke-linejoin="round"/><path d="M1 2.200h5l1.400 1.500h7.600" fill="none" stroke="#7cacf8" stroke-width="1.600" stroke-linejoin="round"/></svg>
<div class="t" style="left:80.3px;top:303.64px;line-height:16px;font-size:11.5px;color:#dddddd;letter-spacing:0.21px;">components</div>
<svg class="abs" style="left:45.8px;top:328.76px" width="4" height="6" viewBox="0 0 4 6"><path d="M.2 0v6L4 3z" fill="#bdbdbd"/></svg>
<svg class="abs" style="left:57.3px;top:325.76px" width="16" height="12" viewBox="0 0 16 12"><path d="M.8 2.300a1 1 0 0 1 1-1h4l1.400 1.600h7a1 1 0 0 1 1 1v6.300a1 1 0 0 1-1 1H1.800a1 1 0 0 1-1-1z" fill="none" stroke="#7cacf8" stroke-width="1.400" stroke-linejoin="round"/><path d="M1 2.200h5l1.400 1.500h7.600" fill="none" stroke="#7cacf8" stroke-width="1.600" stroke-linejoin="round"/></svg>
<div class="t" style="left:80.3px;top:324.06px;line-height:16px;font-size:11.5px;color:#dddddd;letter-spacing:0.21px;">directive</div>
<svg class="abs" style="left:43.8px;top:350.38px" width="7" height="4.200" viewBox="0 0 7 4.200"><path d="M0 .2h7L3.500 4.200z" fill="#bdbdbd"/></svg>
<svg class="abs" style="left:57.3px;top:346.18px" width="16" height="12" viewBox="0 0 16 12"><path d="M.8 2.300a1 1 0 0 1 1-1h4l1.400 1.600h7a1 1 0 0 1 1 1v6.300a1 1 0 0 1-1 1H1.800a1 1 0 0 1-1-1z" fill="none" stroke="#7cacf8" stroke-width="1.400" stroke-linejoin="round"/><path d="M1 2.200h5l1.400 1.500h7.600" fill="none" stroke="#7cacf8" stroke-width="1.600" stroke-linejoin="round"/></svg>
<div class="t" style="left:80.3px;top:344.48px;line-height:16px;font-size:11.5px;color:#dddddd;letter-spacing:-0.04px;">layout</div>
<svg class="abs" style="left:56.9px;top:369.6px" width="4" height="6" viewBox="0 0 4 6"><path d="M.2 0v6L4 3z" fill="#bdbdbd"/></svg>
<svg class="abs" style="left:68.4px;top:366.6px" width="16" height="12" viewBox="0 0 16 12"><path d="M.8 2.300a1 1 0 0 1 1-1h4l1.400 1.600h7a1 1 0 0 1 1 1v6.300a1 1 0 0 1-1 1H1.800a1 1 0 0 1-1-1z" fill="none" stroke="#7cacf8" stroke-width="1.400" stroke-linejoin="round"/><path d="M1 2.200h5l1.400 1.500h7.600" fill="none" stroke="#7cacf8" stroke-width="1.600" stroke-linejoin="round"/></svg>
<div class="t" style="left:91.4px;top:364.9px;line-height:16px;font-size:11.5px;color:#dddddd;letter-spacing:0.21px;">components</div>
<svg class="abs" style="left:70.9px;top:386.02px" width="11" height="14" viewBox="0 0 11 14"><path d="M.8 1.800a1 1 0 0 1 1-1h4.600l3.800 3.800v7.600a1 1 0 0 1-1 1H1.800a1 1 0 0 1-1-1z" fill="none" stroke="#ec8a57" stroke-width="1.400" stroke-linejoin="round"/><path d="M6.200 1v4h4" fill="none" stroke="#ec8a57" stroke-width="1.200"/></svg>
<div class="t" style="left:91.4px;top:385.32px;line-height:16px;font-size:11.5px;color:#dddddd;font-style:italic;letter-spacing:-0.09px;">index.vue</div>
<svg class="abs" style="left:70.9px;top:406.44px" width="11" height="14" viewBox="0 0 11 14"><path d="M.8 1.800a1 1 0 0 1 1-1h4.600l3.800 3.800v7.600a1 1 0 0 1-1 1H1.800a1 1 0 0 1-1-1z" fill="none" stroke="#ec8a57" stroke-width="1.400" stroke-linejoin="round"/><path d="M6.200 1v4h4" fill="none" stroke="#ec8a57" stroke-width="1.200"/></svg>
<div class="t" style="left:91.4px;top:405.74px;line-height:16px;font-size:11.5px;color:#dddddd;letter-spacing:-0.09px;">index.vue</div>
<svg class="abs" style="left:70.9px;top:426.86px" width="11" height="14" viewBox="0 0 11 14"><path d="M.8 1.800a1 1 0 0 1 1-1h4.600l3.800 3.800v7.600a1 1 0 0 1-1 1H1.800a1 1 0 0 1-1-1z" fill="none" stroke="#ec8a57" stroke-width="1.400" stroke-linejoin="round"/><path d="M6.200 1v4h4" fill="none" stroke="#ec8a57" stroke-width="1.200"/></svg>
<div class="t" style="left:91.4px;top:426.16px;line-height:16px;font-size:11.5px;color:#dddddd;letter-spacing:0.02px;">index.vue?vue&amp;type=style&amp;inde…</div>
<svg class="abs" style="left:45.8px;top:451.28px" width="4" height="6" viewBox="0 0 4 6"><path d="M.2 0v6L4 3z" fill="#bdbdbd"/></svg>
<svg class="abs" style="left:57.3px;top:448.28px" width="16" height="12" viewBox="0 0 16 12"><path d="M.8 2.300a1 1 0 0 1 1-1h4l1.400 1.600h7a1 1 0 0 1 1 1v6.300a1 1 0 0 1-1 1H1.800a1 1 0 0 1-1-1z" fill="none" stroke="#7cacf8" stroke-width="1.400" stroke-linejoin="round"/><path d="M1 2.200h5l1.400 1.500h7.600" fill="none" stroke="#7cacf8" stroke-width="1.600" stroke-linejoin="round"/></svg>
<div class="t" style="left:80.3px;top:446.58px;line-height:16px;font-size:11.5px;color:#dddddd;letter-spacing:0.01px;">plugins</div>
<svg class="abs" style="left:45.8px;top:471.7px" width="4" height="6" viewBox="0 0 4 6"><path d="M.2 0v6L4 3z" fill="#bdbdbd"/></svg>
<svg class="abs" style="left:57.3px;top:468.7px" width="16" height="12" viewBox="0 0 16 12"><path d="M.8 2.300a1 1 0 0 1 1-1h4l1.400 1.600h7a1 1 0 0 1 1 1v6.300a1 1 0 0 1-1 1H1.800a1 1 0 0 1-1-1z" fill="none" stroke="#7cacf8" stroke-width="1.400" stroke-linejoin="round"/><path d="M1 2.200h5l1.400 1.500h7.600" fill="none" stroke="#7cacf8" stroke-width="1.600" stroke-linejoin="round"/></svg>
<div class="t" style="left:80.3px;top:467px;line-height:16px;font-size:11.5px;color:#dddddd;letter-spacing:0.09px;">router</div>
<svg class="abs" style="left:45.8px;top:492.12px" width="4" height="6" viewBox="0 0 4 6"><path d="M.2 0v6L4 3z" fill="#bdbdbd"/></svg>
<svg class="abs" style="left:57.3px;top:489.12px" width="16" height="12" viewBox="0 0 16 12"><path d="M.8 2.300a1 1 0 0 1 1-1h4l1.400 1.600h7a1 1 0 0 1 1 1v6.300a1 1 0 0 1-1 1H1.800a1 1 0 0 1-1-1z" fill="none" stroke="#7cacf8" stroke-width="1.400" stroke-linejoin="round"/><path d="M1 2.200h5l1.400 1.500h7.600" fill="none" stroke="#7cacf8" stroke-width="1.600" stroke-linejoin="round"/></svg>
<div class="t" style="left:80.3px;top:487.42px;line-height:16px;font-size:11.5px;color:#dddddd;letter-spacing:-0.02px;">store</div>
<svg class="abs" style="left:45.8px;top:512.54px" width="4" height="6" viewBox="0 0 4 6"><path d="M.2 0v6L4 3z" fill="#bdbdbd"/></svg>
<svg class="abs" style="left:57.3px;top:509.54px" width="16" height="12" viewBox="0 0 16 12"><path d="M.8 2.300a1 1 0 0 1 1-1h4l1.400 1.600h7a1 1 0 0 1 1 1v6.300a1 1 0 0 1-1 1H1.800a1 1 0 0 1-1-1z" fill="none" stroke="#7cacf8" stroke-width="1.400" stroke-linejoin="round"/><path d="M1 2.200h5l1.400 1.500h7.600" fill="none" stroke="#7cacf8" stroke-width="1.600" stroke-linejoin="round"/></svg>
<div class="t" style="left:80.3px;top:507.84px;line-height:16px;font-size:11.5px;color:#dddddd;letter-spacing:0.01px;">utils</div>
<svg class="abs" style="left:45.8px;top:532.96px" width="4" height="6" viewBox="0 0 4 6"><path d="M.2 0v6L4 3z" fill="#bdbdbd"/></svg>
<svg class="abs" style="left:57.3px;top:529.96px" width="16" height="12" viewBox="0 0 16 12"><path d="M.8 2.300a1 1 0 0 1 1-1h4l1.400 1.600h7a1 1 0 0 1 1 1v6.300a1 1 0 0 1-1 1H1.800a1 1 0 0 1-1-1z" fill="none" stroke="#7cacf8" stroke-width="1.400" stroke-linejoin="round"/><path d="M1 2.200h5l1.400 1.500h7.600" fill="none" stroke="#7cacf8" stroke-width="1.600" stroke-linejoin="round"/></svg>
<div class="t" style="left:80.3px;top:528.26px;line-height:16px;font-size:11.5px;color:#dddddd;letter-spacing:0.27px;">views/product</div>
<svg class="abs" style="left:59.8px;top:549.38px" width="11" height="14" viewBox="0 0 11 14"><path d="M.8 1.800a1 1 0 0 1 1-1h4.600l3.800 3.800v7.600a1 1 0 0 1-1 1H1.800a1 1 0 0 1-1-1z" fill="none" stroke="#ec8a57" stroke-width="1.400" stroke-linejoin="round"/><path d="M6.200 1v4h4" fill="none" stroke="#ec8a57" stroke-width="1.200"/></svg>
<div class="t" style="left:80.3px;top:548.68px;line-height:16px;font-size:11.5px;color:#dddddd;font-style:italic;letter-spacing:-0.12px;">App.vue</div>
<svg class="abs" style="left:59.8px;top:569.8px" width="11" height="14" viewBox="0 0 11 14"><path d="M.8 1.800a1 1 0 0 1 1-1h4.600l3.800 3.800v7.600a1 1 0 0 1-1 1H1.800a1 1 0 0 1-1-1z" fill="none" stroke="#ec8a57" stroke-width="1.400" stroke-linejoin="round"/><path d="M6.200 1v4h4" fill="none" stroke="#ec8a57" stroke-width="1.200"/></svg>
<div class="t" style="left:80.3px;top:569.1px;line-height:16px;font-size:11.5px;color:#dddddd;letter-spacing:-0.12px;">App.vue</div>
<svg class="abs" style="left:59.8px;top:590.22px" width="11" height="14" viewBox="0 0 11 14"><path d="M.8 1.800a1 1 0 0 1 1-1h4.600l3.800 3.800v7.600a1 1 0 0 1-1 1H1.800a1 1 0 0 1-1-1z" fill="none" stroke="#ec8a57" stroke-width="1.400" stroke-linejoin="round"/><path d="M6.200 1v4h4" fill="none" stroke="#ec8a57" stroke-width="1.200"/></svg>
<div class="t" style="left:80.3px;top:589.52px;line-height:16px;font-size:11.5px;color:#dddddd;font-style:italic;letter-spacing:0.01px;">main.js</div>
<div class="abs" style="left:276px;top:51px;width:11px;height:555px;background:#2b2b2b;"></div>
<div class="abs" style="left:275.5px;top:51px;width:1px;height:555px;background:#3c3c3c;"></div>
<div class="abs" style="left:278px;top:55px;width:7.3px;height:338px;background:#6b6b6b;border-radius:4px;"></div>
<div class="abs" style="left:797px;top:51px;width:282px;height:555px;background:#252525;"></div>
<div class="abs" style="left:797px;top:51px;width:282px;height:18px;background:#2b2b2c;"></div>
<svg class="abs" style="left:807.500px;top:56.8px" width="4.500" height="6.400" viewBox="0 0 4.500 6.400"><path d="M.2 0v6.400L4.400 3.200z" fill="#c7c7c7"/></svg>
<div class="t" style="left:817.5px;top:52.3px;line-height:16px;font-size:11.3px;color:#dddddd;letter-spacing:0.23px;">Watch</div>
<div class="abs" style="left:797px;top:70px;width:282px;height:20.6px;background:#2b2b2c;"></div>
<svg class="abs" style="left:806px;top:77.3px" width="7" height="6" viewBox="0 0 7 6"><path d="M0 .5h7L3.500 5.500z" fill="#c7c7c7"/></svg>
<div class="t" style="left:817.5px;top:72.6px;line-height:16px;font-size:11.3px;color:#dddddd;letter-spacing:0.18px;">Breakpoints</div>
<div class="abs" style="left:797px;top:90.5px;width:282px;height:1px;background:#474747;"></div>
<div class="abs" style="left:803.500px;top:97px;width:9.500px;height:9.500px;border:1px solid #6a6a6a;border-radius:2px;background:#3a3a3a"></div>
<div class="t" style="left:820px;top:94.1px;line-height:16px;font-size:11.3px;color:#dddddd;letter-spacing:0.19px;">Pause on uncaught exceptions</div>
<div class="abs" style="left:803.500px;top:114.2px;width:9.500px;height:9.500px;border:1px solid #6a6a6a;border-radius:2px;background:#3a3a3a"></div>
<div class="t" style="left:820px;top:111.3px;line-height:16px;font-size:11.3px;color:#dddddd;letter-spacing:0.18px;">Pause on caught exceptions</div>
<div class="abs" style="left:797px;top:129.7px;width:282px;height:20.6px;background:#2b2b2c;"></div>
<svg class="abs" style="left:806px;top:137px" width="7" height="6" viewBox="0 0 7 6"><path d="M0 .5h7L3.500 5.500z" fill="#c7c7c7"/></svg>
<div class="t" style="left:817.5px;top:132.3px;line-height:16px;font-size:11.3px;color:#dddddd;letter-spacing:0.12px;">Scope</div>
<div class="abs" style="left:797px;top:150.3px;width:282px;height:1px;background:#474747;"></div>
<div class="t" style="left:910.5px;top:154.2px;line-height:16px;font-size:11.3px;color:#9e9e9e;font-style:italic;letter-spacing:0.19px;">Not paused</div>
<div class="abs" style="left:797px;top:174.7px;width:282px;height:20.6px;background:#2b2b2c;"></div>
<svg class="abs" style="left:806px;top:182px" width="7" height="6" viewBox="0 0 7 6"><path d="M0 .5h7L3.500 5.500z" fill="#c7c7c7"/></svg>
<div class="t" style="left:817.5px;top:177.3px;line-height:16px;font-size:11.3px;color:#dddddd;letter-spacing:0.07px;">Call Stack</div>
<div class="abs" style="left:797px;top:195.3px;width:282px;height:1px;background:#474747;"></div>
<div class="t" style="left:910.5px;top:198.7px;line-height:16px;font-size:11.3px;color:#9e9e9e;font-style:italic;letter-spacing:0.19px;">Not paused</div>
<div class="abs" style="left:797px;top:219.7px;width:282px;height:20.6px;background:#2b2b2c;"></div>
<svg class="abs" style="left:807.500px;top:226.8px" width="4.500" height="6.400" viewBox="0 0 4.500 6.400"><path d="M.2 0v6.400L4.400 3.200z" fill="#c7c7c7"/></svg>
<div class="t" style="left:817.5px;top:222.3px;line-height:16px;font-size:11.3px;color:#dddddd;letter-spacing:0.16px;">XHR/fetch Breakpoints</div>
<div class="abs" style="left:797px;top:239.4px;width:282px;height:20.6px;background:#2b2b2c;"></div>
<svg class="abs" style="left:807.500px;top:246.5px" width="4.500" height="6.400" viewBox="0 0 4.500 6.400"><path d="M.2 0v6.400L4.400 3.200z" fill="#c7c7c7"/></svg>
<div class="t" style="left:817.5px;top:242px;line-height:16px;font-size:11.3px;color:#dddddd;letter-spacing:0.1px;">DOM Breakpoints</div>
<div class="abs" style="left:797px;top:260.3px;width:282px;height:20.6px;background:#2b2b2c;"></div>
<svg class="abs" style="left:807.500px;top:267.4px" width="4.500" height="6.400" viewBox="0 0 4.500 6.400"><path d="M.2 0v6.400L4.400 3.200z" fill="#c7c7c7"/></svg>
<div class="t" style="left:817.5px;top:262.9px;line-height:16px;font-size:11.3px;color:#dddddd;letter-spacing:0.12px;">Global Listeners</div>
<div class="abs" style="left:797px;top:280.7px;width:282px;height:20.6px;background:#2b2b2c;"></div>
<svg class="abs" style="left:807.500px;top:287.8px" width="4.500" height="6.400" viewBox="0 0 4.500 6.400"><path d="M.2 0v6.400L4.400 3.200z" fill="#c7c7c7"/></svg>
<div class="t" style="left:817.5px;top:283.3px;line-height:16px;font-size:11.3px;color:#dddddd;letter-spacing:0.18px;">Event Listener Breakpoints</div>
<div class="abs" style="left:797px;top:300.4px;width:282px;height:20.6px;background:#2b2b2c;"></div>
<svg class="abs" style="left:807.500px;top:307.5px" width="4.500" height="6.400" viewBox="0 0 4.500 6.400"><path d="M.2 0v6.400L4.400 3.200z" fill="#c7c7c7"/></svg>
<div class="t" style="left:817.5px;top:303px;line-height:16px;font-size:11.3px;color:#dddddd;letter-spacing:0.14px;">CSP Violation Breakpoints</div>
<div id="ed" class="abs" style="left:288px;top:51px;width:497px;height:528.5px;overflow:hidden">
<div class="abs" style="left:53.2px;top:17.93px;width:1px;height:171.12px;background:#444"></div>
<div class="abs" style="left:65.46px;top:32.19px;width:1px;height:142.6px;background:#444"></div>
<div class="abs" style="left:77.73px;top:74.97px;width:1px;height:85.56px;background:#444"></div>
<div class="abs" style="left:89.99px;top:89.23px;width:1px;height:28.52px;background:#444"></div>
<div class="abs" style="left:53.2px;top:445.73px;width:1px;height:57.04px;background:#444"></div>
<div id="ln" class="abs" style="left:0;top:3.67px;width:35px">
<div>1</div>
<div>2</div>
<div>3</div>
<div>4</div>
<div>5</div>
<div>6</div>
<div>7</div>
<div>8</div>
<div>9</div>
<div>10</div>
<div>11</div>
<div>12</div>
<div>13</div>
<div>14</div>
<div>15</div>
<div>16</div>
<div>17</div>
<div>18</div>
<div>19</div>
<div>20</div>
<div>21</div>
<div>22</div>
<div>23</div>
<div>24</div>
<div>25</div>
<div>26</div>
<div>27</div>
<div>28</div>
<div>29</div>
<div>30</div>
<div>31</div>
<div>32</div>
<div>33</div>
<div>34</div>
<div>35</div>
<div>36</div>
<div>37</div>
</div>
<pre id="code" class="abs" style="left:56.4px;top:3.67px">
<span class="ct">&lt;template&gt;</span>
  <span class="ct">&lt;div</span> :class="classObj" <span class="ca">class</span>=<span class="cs">"app-wrapper"</span> :style="{ <span class="cs">'--current-color'</span>: theme }"&gt;
    <span class="ct">&lt;div</span> <span class="ck">v-if</span>="device === <span class="cs">'mobile'</span> &amp;&amp; sidebar.<span class="cp">opened</span>" <span class="ca">class</span>=<span class="cs">"drawer-bg"</span> @click="handleClickOutside"/&gt;
    <span class="ct">&lt;sidebar</span> <span class="ck">v-if</span>="!sidebar.<span class="cp">hide</span>" <span class="ca">class</span>=<span class="cs">"sidebar-container"</span> /&gt;
    <span class="ct">&lt;div</span> :class="{ <span class="cp">hasTagsView</span>: needTagsView, <span class="cp">sidebarHide</span>: sidebar.<span class="cp">hide</span> }" <span class="ca">class</span>=<span class="cs">"main-container"</span>&gt;
      <span class="ct">&lt;div</span> :class="{ <span class="cs">'fixed-header'</span>: fixedHeader }"&gt;
        <span class="ct">&lt;navbar</span> @setLayout="setLayout" /&gt;
        <span class="ct">&lt;tags-view</span> <span class="ck">v-if</span>="needTagsView" /&gt;
      <span class="ct">&lt;/div&gt;</span>
      <span class="ct">&lt;app-main</span> /&gt;
      <span class="ct">&lt;settings</span> ref=<span class="cs">"settingRef"</span> /&gt;
    <span class="ct">&lt;/div&gt;</span>
  <span class="ct">&lt;/div&gt;</span>
<span class="ct">&lt;/template&gt;</span>

<span class="ct">&lt;script</span> <span class="ca">setup</span><span class="ct">&gt;</span>
<span class="ck">import</span> { <span class="cd">useWindowSize</span> } <span class="ck">from</span> <span class="cs">'@vueuse/core'</span>
<span class="ck">import</span> <span class="cd">Sidebar</span> <span class="ck">from</span> <span class="cs">'./components/Sidebar/index.vue'</span>
<span class="ck">import</span> { <span class="cd">AppMain</span>, <span class="cd">Navbar</span>, <span class="cd">Settings</span>, <span class="cd">TagsView</span> } <span class="ck">from</span> <span class="cs">'./components'</span>
<span class="ck">import</span> <span class="cd">useAppStore</span> <span class="ck">from</span> <span class="cs">'@/store/modules/app'</span>
<span class="ck">import</span> <span class="cd">useSettingsStore</span> <span class="ck">from</span> <span class="cs">'@/store/modules/settings'</span>

<span class="ck">const</span> <span class="cd">settingsStore</span> = useSettingsStore()
<span class="ck">const</span> <span class="cd">theme</span> = computed(() =&gt; settingsStore.<span class="cp">theme</span>)
<span class="ck">const</span> <span class="cd">sideTheme</span> = computed(() =&gt; settingsStore.<span class="cp">sideTheme</span>)
<span class="ck">const</span> <span class="cd">sidebar</span> = computed(() =&gt; useAppStore().<span class="cp">sidebar</span>)
<span class="ck">const</span> <span class="cd">device</span> = computed(() =&gt; useAppStore().<span class="cp">device</span>)
<span class="ck">const</span> <span class="cd">needTagsView</span> = computed(() =&gt; settingsStore.<span class="cp">tagsView</span>)
<span class="ck">const</span> <span class="cd">fixedHeader</span> = computed(() =&gt; settingsStore.<span class="cp">fixedHeader</span>)

<span class="ck">const</span> <span class="cd">classObj</span> = computed(() =&gt; ({
  <span class="cp">hideSidebar</span>: !sidebar.<span class="cp">value</span>.<span class="cp">opened</span>,
  <span class="cp">openSidebar</span>: sidebar.<span class="cp">value</span>.<span class="cp">opened</span>,
  <span class="cp">withoutAnimation</span>: sidebar.<span class="cp">value</span>.<span class="cp">withoutAnimation</span>,
  <span class="cp">mobile</span>: device.<span class="cp">value</span> === <span class="cs">'mobile'</span>
}))
</pre>
</div>
<div class="abs" style="left:786px;top:51px;width:10px;height:528.5px;background:#2b2b2b;"></div>
<div class="abs" style="left:786px;top:51px;width:1px;height:528.5px;background:#333;"></div>
<div class="abs" style="left:787px;top:54px;width:7px;height:121.5px;background:#6b6b6b;border-radius:4px;"></div>
<div class="abs" style="left:288px;top:579.5px;width:508px;height:1px;background:#3a3a3a;"></div>
<div class="abs" style="left:290.5px;top:582px;width:357px;height:6px;background:#6b6b6b;border-radius:3px;"></div>
<div class="abs" style="left:288px;top:590.5px;width:508px;height:1px;background:#4a4a4a;"></div>
<div class="t" style="left:296px;top:595.5px;line-height:16px;font-size:11.3px;color:#dddddd;letter-spacing:-0.01px;">Line 13, Column 9</div>
<div class="t" style="left:606px;top:595.5px;line-height:16px;font-size:11.3px;color:#dddddd;letter-spacing:0.01px;">(From index.vue)</div>
<div class="t" style="left:704px;top:595.5px;line-height:16px;font-size:11.3px;color:#a8c7fa;letter-spacing:0.21px;text-decoration:underline;">Coverage: n/a</div>
</div>
</body>
</html>
